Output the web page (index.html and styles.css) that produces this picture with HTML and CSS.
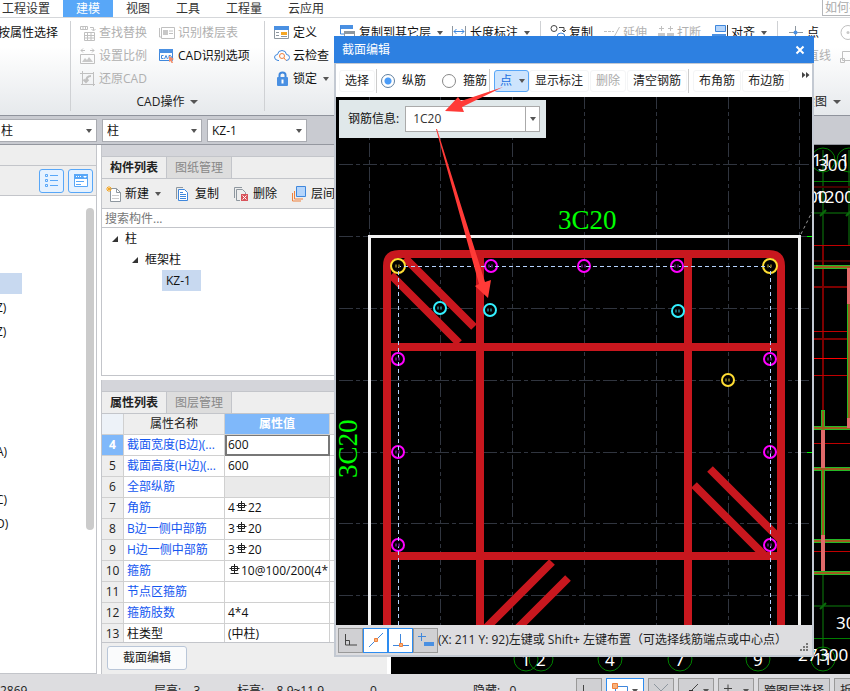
FILE: index.html
```
<!DOCTYPE html>
<html lang="zh-CN">

<head>
    <meta charset="UTF-8">
    <meta name="viewport" content="width=device-width, initial-scale=1.0">
    <title>截面编辑</title>
    <link rel="stylesheet" href="styles.css">
</head>

<body>
    <div class="app">
        <!-- 菜单栏 -->
        <nav class="menubar">
            <a href="#">工程设置</a>
            <a href="#" class="active">建模</a>
            <a href="#">视图</a>
            <a href="#">工具</a>
            <a href="#">工程量</a>
            <a href="#">云应用</a>
            <input class="help-search" type="text" aria-label="搜索帮助" placeholder="如何在">
        </nav>

        <!-- 功能区 -->
        <div class="ribbon">
            <div class="group group-select">
                <button class="tool">按属性选择</button>
            </div>
            <div class="group group-cad">
                <button class="tool" disabled>
                    <svg class="icon" viewBox="0 0 16 16"><path d="M.5 1.500h7v3h-7zM3 1v3M5.500 1v3M10 2.500h3.500v3M11.500 4l2 2 2-2M4.500 7.500h10v8h-10zM4 10.500h11M4 13h11M7.500 7v8M11 7v8" /></svg>
                    查找替换
                </button>
                <button class="tool" disabled>
                    <svg class="icon" viewBox="0 0 16 16"><path d="M.5 3v9H3M2.500 2.500h13v11h-13zM10 6h4M10 8.500h4" /><path class="solid" d="M4 5h5v5H4z" /></svg>
                    识别楼层表
                </button>
                <button class="tool" disabled>
                    <svg class="icon" viewBox="0 0 16 16"><path d="M1 2.500h4M3 .5l-2 2 2 2M10 2.500h4M12 .5l2 2-2 2M.5 6.500h14v9H.5z" /><path class="solid" d="M2 14l3-4 2 2 2-3 4 5z" /></svg>
                    设置比例
                </button>
                <button class="tool">
                    <svg class="icon" viewBox="0 0 16 16"><path class="blue" d="M.5 1.500h13v11H.5z" /><path class="blue-fill" d="M0 1h14v4H0z" /><path class="blue" d="M4.500 7.500h-2v3h2M5.500 11L7 7.500 8.500 11M10 7.500v3h1.500l1-1.500-1-1.500z" /><path class="salmon" d="M10 8l5 3-2 1 1 3h-1.500l-1-2-1.500 1z" /></svg>
                    CAD识别选项
                </button>
                <button class="tool" disabled>
                    <svg class="icon" viewBox="0 0 16 16"><path d="M2.500 0v14M0 2.500h14M13.500 1v14M1 13.500h14" /><path d="M11 5Q6 5 6 11M3.500 8.500L6 11l2.500-2.500" stroke-width="2" /></svg>
                    还原CAD
                </button>
                <button class="caption">CAD操作<i class="caret"></i></button>
            </div>
            <div class="group group-common">
                <button class="tool">
                    <svg class="icon" viewBox="0 0 16 16"><path class="grey" d="M.5 1.500h14v12H.5zM2 7.500h3M2 10.500h3M7 11.500h6" /><path class="blue-fill" d="M0 1h15v4H0z" /><path class="orange-fill" d="M7 7h6v3H7z" /></svg>
                    定义
                </button>
                <button class="tool">
                    <svg class="icon" viewBox="0 0 16 16"><path class="blue-fill" d="M0 0h13v4H0z" /><path class="blue" d="M.5 1v8H4" /><path class="grey" d="M4.500 6.500h10v8h-10z" /><path class="grey-fill" d="M4 6h11v3H4z" /></svg>
                    复制到其它层<i class="caret"></i>
                </button>
                <button class="tool">
                    <svg class="icon" viewBox="0 0 16 16"><path class="grey" d="M1.500 1v14M14.500 1v14" /><path class="blue" d="M3 6.500h10M5.500 4L3 6.500 5.500 9M10.500 4L13 6.500 10.500 9" /></svg>
                    长度标注<i class="caret"></i>
                </button>
                <button class="tool">
                    <svg class="icon" viewBox="0 0 16 16"><path class="blue" d="M5 12.500H4Q.5 12 .5 9 1 6.500 3.500 6.500 4 2.500 8 2.500t4.500 4q3 0 3 3t-3.500 3" /><circle class="orange" cx="8" cy="8" r="2.500" /><path class="orange" d="M10 10l2 2.500" /></svg>
                    云检查
                </button>
                <button class="tool lock">
                    <svg class="icon" viewBox="0 0 16 16"><path class="blue" d="M5.500 7V4q0-2.500 3-2.500t3 2.500v3" stroke-width="2" /><rect class="blue-fill" x="3" y="6" width="11" height="9" rx="1" /><path d="M8.500 8.500v4" stroke="#fff" stroke-width="2" /></svg>
                    锁定<i class="caret"></i>
                </button>
            </div>
            <div class="group group-edit">
                <button class="tool">
                    <svg class="icon" viewBox="0 0 16 16"><circle class="dark" cx="4" cy="3.500" r="3" /><path class="dark" d="M9 2.500h5v4M12 5l2 2 2-2" /><circle class="blue" cx="11" cy="12" r="4" /></svg>
                    复制
                </button>
                <button class="tool" disabled>
                    <svg class="icon" viewBox="0 0 16 16"><path d="M0 6.500h3M4 6.500h3M8 6.500h2M15.500 2L10 12" /></svg>
                    延伸
                </button>
                <button class="tool" disabled>
                    <svg class="icon" viewBox="0 0 16 16"><path d="M1 3.500h5M3.500 1v5M10 3.500h5M12.500 1v5" /><path class="solid" d="M0 8h7v6H0zM9 8h7v6H9z" /></svg>
                    打断
                </button>
                <button class="tool">
                    <svg class="icon" viewBox="0 0 16 16"><path class="blue pale" d="M3.500.5h10v6h-10z" /><path class="blue-fill" d="M0 9h14v6H0z" /><path class="dark" d="M15.500 0v16" /></svg>
                    对齐<i class="caret"></i>
                </button>
            </div>
            <div class="group group-draw">
                <button class="tool">
                    <svg class="icon" viewBox="0 0 16 16"><path class="grey" d="M1 7.500h14M7.500 1v14" /><circle class="blue-fill" cx="7.500" cy="7.500" r="2" /></svg>
                    点
                </button>
                <button class="tool" aria-label="圆" disabled>
                    <svg class="icon" viewBox="0 0 16 16"><circle cx="8" cy="7.500" r="7" /><circle class="solid" cx="8" cy="7.500" r="1.500" /></svg>
                </button>
                <button class="tool" disabled>
                    <svg class="icon" viewBox="0 0 16 16"><path d="M2 13L13 2" /></svg>
                    直线
                </button>
                <button class="tool" aria-label="矩形" disabled>
                    <svg class="icon" viewBox="0 0 16 16"><path d="M2.500 3.500h13v9h-13zM.5 10.500h4v4h-4z" /></svg>
                </button>
                <button class="caption">绘图<i class="caret"></i></button>
            </div>
        </div>

        <!-- 构件选择 -->
        <div class="selectors">
            <label class="select-wrap"><select aria-label="构件分类"><option>柱</option></select></label>
            <label class="select-wrap"><select aria-label="构件类型"><option>柱</option></select></label>
            <label class="select-wrap"><select aria-label="构件名称"><option>KZ-1</option></select></label>
        </div>

        <div class="workspace">
            <!-- 导航树 -->
            <aside class="nav-panel">
                <div class="nav-title"></div>
                <div class="nav-tools">
                    <button class="view-btn" aria-label="列表">
                        <svg class="icon" viewBox="0 0 16 16"><path class="sky" d="M1.500 1.500h2v2h-2zM1.500 6.500h2v2h-2zM1.500 11.500h2v2h-2zM6 2.500h8M6 7.500h8M6 12.500h8" /></svg>
                    </button>
                    <button class="view-btn" aria-label="详情">
                        <svg class="icon" viewBox="0 0 16 16"><path class="sky white" d="M1.500 1.500h13v12h-13z" /><path fill="#58a7f8" d="M1 1h14v5H1z" /><path class="sky" d="M3 8.500h8M3 11.500h5" /><path d="M3 3.500h1M5 3.500h1M7 3.500h1" stroke="#fff" /><path d="M10 3h4l-2 2z" fill="#fff" /></svg>
                    </button>
                </div>
                <div class="nav-list">
                    <ul>
                        <li class="selected"></li>
                        <li>Z)</li>
                        <li>Z)</li>
                        <li></li>
                        <li></li>
                        <li></li>
                        <li></li>
                        <li>A)</li>
                        <li></li>
                        <li>C)</li>
                        <li>D)</li>
                    </ul>
                    <div class="scroll-thumb"></div>
                </div>
            </aside>

            <div class="dock">
                <section class="panel panel-components">
                    <div class="grip-bar"></div>
                    <div class="tabs">
                        <button class="tab active">构件列表</button>
                        <button class="tab">图纸管理</button>
                    </div>
                    <div class="panel-tools">
                        <button class="tool">
                            <svg class="icon" viewBox="0 0 16 16"><path class="grey white" d="M4.500 2.500h6l4 4v9h-10z" /><path class="grey" d="M10.500 2.500v4h4" /><path d="M6 9.500h7M6 12.500h7" stroke="#ccc" /><path d="M3 0v6M0 3h6M1 1l4 4M5 1L1 5" stroke="#f5a623" /></svg>
                            新建<i class="caret"></i>
                        </button>
                        <button class="tool">
                            <svg class="icon" viewBox="0 0 16 16"><path class="grey" d="M.5 13V1.500H7" /><path class="blue white" d="M2.500 3.500h6l3 3v8h-9z" /><path class="blue" d="M4 6.500h3M4 8.500h6M4 10.500h6M4 12.500h6" /></svg>
                            复制
                        </button>
                        <button class="tool">
                            <svg class="icon" viewBox="0 0 16 16"><path class="grey" d="M.5 12V1.500H8M6 14.500H2.500v-11h6l3 3V8" /><path fill="#d9535b" d="M7 8h7v7H7z" /><path d="M8.500 9.500l4 4M12.500 9.500l-4 4" stroke="#fff" /></svg>
                            删除
                        </button>
                        <button class="tool">
                            <svg class="icon" viewBox="0 0 16 16"><path class="orange" d="M.5 7v8H9M2.500 5v8H11" /><path class="blue pale" d="M4.500.5h9v10h-9z" /></svg>
                            层间复制
                        </button>
                    </div>
                    <input class="search" type="text" aria-label="搜索构件" placeholder="搜索构件...">
                    <ul class="tree">
                        <li><span><i class="expand"></i>柱</span>
                            <ul>
                                <li><span><i class="expand"></i>框架柱</span>
                                    <ul class="leaves">
                                        <li><span class="selected">KZ-1</span></li>
                                    </ul>
                                </li>
                            </ul>
                        </li>
                    </ul>
                </section>

                <section class="panel panel-props">
                    <div class="grip-bar"></div>
                    <div class="tabs">
                        <button class="tab active">属性列表</button>
                        <button class="tab">图层管理</button>
                    </div>
                    <div class="props-scroll">
                        <table class="props">
                            <thead>
                                <tr><th class="no"></th><th class="name">属性名称</th><th class="value">属性值</th><th></th></tr>
                            </thead>
                            <tbody>
                                <tr class="current"><td>4</td><td>截面宽度(B边)(...</td><td>600</td><td></td></tr>
                                <tr><td>5</td><td>截面高度(H边)(...</td><td>600</td><td></td></tr>
                                <tr><td>6</td><td>全部纵筋</td><td class="disabled"></td><td></td></tr>
                                <tr><td>7</td><td>角筋</td><td class="rebar">4<svg class="grade" viewBox="0 0 11 12"><use href="#grade" /></svg>22</td><td></td></tr>
                                <tr><td>8</td><td>B边一侧中部筋</td><td class="rebar">3<svg class="grade" viewBox="0 0 11 12"><use href="#grade" /></svg>20</td><td></td></tr>
                                <tr><td>9</td><td>H边一侧中部筋</td><td class="rebar">3<svg class="grade" viewBox="0 0 11 12"><use href="#grade" /></svg>20</td><td></td></tr>
                                <tr><td>10</td><td>箍筋</td><td class="rebar"><svg class="grade" viewBox="0 0 11 12"><use href="#grade" /></svg>10@100/200(4*</td><td></td></tr>
                                <tr><td>11</td><td>节点区箍筋</td><td></td><td></td></tr>
                                <tr><td>12</td><td>箍筋肢数</td><td>4*4</td><td></td></tr>
                                <tr class="plain"><td>13</td><td>柱类型</td><td>(中柱)</td><td></td></tr>
                            </tbody>
                        </table>
                    </div>
                    <div class="panel-foot">
                        <button class="edit-btn">截面编辑</button>
                    </div>
                </section>
            </div>

            <!-- 主绘图区 -->
            <svg class="plan" viewBox="391 145 459 529" preserveAspectRatio="xMaxYMin slice">
                <defs>
                    <!-- 三级钢符号 -->
                    <g id="grade" fill="none" stroke="#222">
                        <path d="M2.500 2.500h6v4h-6zM5.500 0v9.500M1.500 9.500h8M.5 4.500h10" />
                    </g>
                </defs>
                <g fill="none">
                    <path stroke="#064006" stroke-width="2" d="M823 150v95M849 150v95M814 213h36M823 575v85M814 606h36" />
                    <path stroke="#007d00" d="M814 181.500h36M814 638.500h36" />
                    <path stroke="#0a6b0a" stroke-width="2" d="M820 216l6-6M846 216l6-6M820 609l6-6" />
                    <path stroke="#450000" stroke-width="2" d="M814 187h36M814 261h36" />
                    <path stroke="#7d0000" stroke-width="2" d="M823 245v165M814 287h36M814 339h36" />
                    <path stroke="#c00000" d="M814 245.500h36M814 331.500h36M814 375.500h36M814 443.500h36M814 551.500h36" />
                    <path stroke="#ff0000" d="M814 358.500h36" />
                    <path stroke="#25b925" stroke-width="4" d="M814 267h36M814 428h36M814 469h36M814 541h36M814 573h36M849 304v114M823 410v19M823 470v65" />
                    <path stroke="#a05a1e" stroke-width="2" d="M814 267h36M814 428h36M814 469h36M814 541h36M814 573h36M849 304v114M823 411v124" />
                    <path stroke="#e06a6a" stroke-width="4" d="M849 268v36M849 418v10M823 430v38M823 535v36" />
                    <g stroke="#008000">
                        <circle cx="823" cy="160" r="12" />
                        <circle cx="849" cy="160" r="12" />
                        <circle cx="526" cy="659" r="12" />
                        <circle cx="541" cy="659" r="12" />
                        <circle cx="610" cy="659" r="12" />
                        <circle cx="680" cy="659" r="12" />
                        <circle cx="758" cy="659" r="12" />
                        <circle cx="823" cy="659" r="12" />
                    </g>
                </g>
                <g class="plan-text">
                    <text x="812" y="166">11</text>
                    <text x="818" y="171">300</text>
                    <text x="840" y="166">11</text>
                    <text x="808" y="203">00</text>
                    <text x="815" y="203">1200</text>
                    <text x="521" y="666">1</text>
                    <text x="536" y="666">2</text>
                    <text x="605" y="666">4</text>
                    <text x="675" y="666">7</text>
                    <text x="753" y="666">9</text>
                    <text x="798" y="661">27</text>
                    <text x="813" y="665">11</text>
                    <text x="819" y="661">300</text>
                    <text x="836" y="629">300</text>
                </g>
            </svg>
        </div>

        <!-- 状态栏 -->
        <footer class="statusbar">
            <span class="coord">2869</span>
            <span class="floor">层高:&nbsp;&nbsp;&nbsp;&nbsp;3</span>
            <span class="level">标高:&nbsp;&nbsp;&nbsp;&nbsp;8.9~11.9</span>
            <span class="count">0</span>
            <span class="hidden-count">隐藏:&nbsp;&nbsp;&nbsp;0</span>
            <div class="status-buttons">
                <button aria-label="正交"><svg class="icon" viewBox="0 0 16 16"><path class="dark" d="M2.500 2v11H14M2.500 9.500h4V13" /></svg></button>
                <button class="on" aria-label="捕捉"><svg class="icon" viewBox="0 0 16 16"><path class="blue" d="M3.500 3.500h12v12h-12z" /><path d="M.5.500h5v5h-5z" fill="#f9b27a" stroke="#f0813c" /></svg><i class="caret"></i></button>
                <button aria-label="交点"><svg class="icon" viewBox="0 0 16 16"><path class="grey" d="M1 1l14 14M15 1L1 15" /></svg></button>
                <button aria-label="中点"><svg class="icon" viewBox="0 0 16 16"><path class="dark" d="M15 1L2 14" /><path fill="#333" d="M6 7h4v4H6z" /></svg><i class="caret"></i></button>
                <button aria-label="坐标"><svg class="icon" viewBox="0 0 16 16"><path class="dark" d="M1 5.500h8M5 1.500v8" /></svg><i class="caret"></i></button>
                <button class="text">跨图层选择</button>
                <button class="text">折线选择</button>
            </div>
        </footer>
    </div>

    <!-- 截面编辑窗口 -->
    <div class="dialog" role="dialog" aria-labelledby="dialogTitle">
        <header class="dialog-title">
            <span id="dialogTitle">截面编辑</span>
            <button class="close" aria-label="关闭"><svg viewBox="0 0 10 10"><path d="M1.500 1.500l7 7M8.500 1.500l-7 7" stroke="#fff" stroke-width="2" /></svg></button>
        </header>

        <div class="dialog-body">
            <div class="dialog-tools">
                <button>选择</button>
                <i class="sep"></i>
                <label class="radio"><input type="radio" name="bar" checked>纵筋</label>
                <label class="radio second"><input type="radio" name="bar">箍筋</label>
                <i class="sep"></i>
                <button class="on">点<i class="caret"></i></button>
                <button>显示标注</button>
                <button disabled>删除</button>
                <button>清空钢筋</button>
                <i class="sep"></i>
                <button>布角筋</button>
                <button>布边筋</button>
                <button class="more" aria-label="更多"><svg viewBox="0 0 8 6"><path d="M0 0l3.500 3L0 6zM4 0l3.500 3L4 6z" fill="#444" /></svg></button>
            </div>

            <div class="canvas">
                <svg class="section" viewBox="337 97 475 528">
                    <!-- 网格 -->
                    <path class="grid" d="M369.500 95v530M440.500 95v530M512.500 95v530M584.500 95v530M656.500 95v530M728.500 95v530M799.500 95v530" />
                    <path class="grid" d="M339 164.500h473M339 236.500h473M339 308.500h473M339 380.500h473M339 452.500h473M339 523.500h473M339 595.500h473" />
                    <path d="M801 234l11-22" stroke="#999" stroke-dasharray="3 3" />
                    <path d="M807 236.500h5M807 452.500h5" stroke="#00ff00" />
                    <!-- 柱边线 -->
                    <path d="M369.500 625V236.500h430V625" fill="none" stroke="#f2f2f2" stroke-width="3" />
                    <!-- 箍筋 -->
                    <g fill="none" stroke="#c8171e" stroke-width="8">
                        <path d="M387 625V266q0-12 12-12h370q12 0 12 12v359" />
                        <path d="M480 625V254M688 625V254M387 347h394M387 556h394" />
                        <path d="M405 258l69 69M391 275l68 68M552 562l-66 66M568 578l-50 50M694 485l71 71M710 469l70 70" />
                    </g>
                    <!-- 钢筋 -->
                    <g fill="#000" stroke-width="2">
                        <g stroke="#ffdd33">
                            <circle cx="398" cy="266" r="7" />
                            <circle cx="770" cy="266" r="7" />
                            <circle cx="728" cy="380" r="6" />
                        </g>
                        <g stroke="#ff00ff">
                            <circle cx="491" cy="266" r="6" />
                            <circle cx="584" cy="266" r="6" />
                            <circle cx="677" cy="266" r="6" />
                            <circle cx="398" cy="359" r="6" />
                            <circle cx="398" cy="452" r="6" />
                            <circle cx="398" cy="545" r="6" />
                            <circle cx="770" cy="359" r="6" />
                            <circle cx="770" cy="452" r="6" />
                            <circle cx="770" cy="545" r="6" />
                        </g>
                        <g stroke="#33f0ff">
                            <circle cx="440" cy="308" r="6" />
                            <circle cx="490" cy="310" r="6" />
                            <circle cx="678" cy="311" r="6" />
                        </g>
                    </g>
                    <path d="M398.500 625V266.500h372V625" fill="none" stroke="#b5d3ff" stroke-dasharray="4 3" />
                    <g fill="none" stroke-dasharray="2 1" stroke-width="3">
                        <path d="M395 266h6M767 266h6M725 380h6" stroke="#6b6018" />
                        <path d="M488 266h6M581 266h6M674 266h6M395 359h6M395 452h6M395 545h6M767 359h6M767 452h6M767 545h6" stroke="#5a1070" />
                        <path d="M437 308h6M487 310h6M675 311h6" stroke="#1a6470" />
                    </g>
                    <text class="mark" x="558" y="229">3C20</text>
                    <text class="mark" transform="translate(357 478) rotate(-90)">3C20</text>
                </svg>

                <div class="rebar-info">
                    <label for="rebarInput">钢筋信息:</label>
                    <div class="combo">
                        <input id="rebarInput" type="text" value="1C20">
                        <button aria-label="展开"><i class="caret"></i></button>
                    </div>
                </div>
            </div>

            <div class="dialog-status">
                <div class="snap-buttons">
                    <button aria-label="正交"><svg class="icon" viewBox="0 0 16 16"><path class="dark" d="M2.500 2v11H14M2.500 8.500h4V13" /></svg></button>
                    <button class="on" aria-label="最近点"><svg class="icon" viewBox="0 0 16 16"><path class="blue" d="M1 15L15 1" /><path class="snap-dot" d="M6.500 6.500h3v3h-3z" /></svg></button>
                    <button class="on" aria-label="垂点"><svg class="icon" viewBox="0 0 16 16"><path class="blue" d="M0 13.500h16M7.500 2v11" /><path class="snap-dot" d="M6.500 11.500h3v3h-3z" /></svg></button>
                    <button aria-label="动态输入"><svg class="icon" viewBox="0 0 16 16"><path class="blue" d="M0 4.500h8M3.500 1v8" /><path class="blue-fill" d="M6 10h10v4H6z" /></svg></button>
                </div>
                <span>(X: 211 Y: 92)左键或 Shift+ 左键布置（可选择线筋端点或中心点）</span>
                <svg class="resize" viewBox="0 0 8 8"><path d="M6 0h2v2H6zM3 3h2v2H3zM6 3h2v2H6zM0 6h2v2H0zM3 6h2v2H3zM6 6h2v2H6z" fill="#777" /></svg>
            </div>
        </div>

        <!-- 操作提示箭头 -->
        <svg class="arrows" viewBox="334 36 480 621">
            <path d="M503 87L461 101l-3-4L445 111l19 1-2-5z" fill="#ff3a37" />
            <path d="M436 129L479 284l-4 2 13 12 3-18-6 2L437 129z" fill="#ff3a37" />
        </svg>
    </div>
</body>

</html>
```
FILE: styles.css
```
* {
    box-sizing: border-box;
}

body {
    margin: 0;
    height: 100vh;
    overflow: hidden;
    position: relative;
    font-family: "Open Sans", "Noto Sans CJK SC", sans-serif;
    font-size: 12px;
    line-height: 18px;
    color: #222;
    background: white;
}

button,
input,
select {
    font: inherit;
    color: inherit;
    margin: 0;
    padding: 0;
    border: none;
    background: none;
    outline: none;
}

button {
    display: flex;
    align-items: center;
    white-space: nowrap;
}

ul {
    list-style: none;
    margin: 0;
    padding: 0;
}

/* 状态栏有一半在窗口下方 */
.app {
    display: flex;
    flex-direction: column;
    height: calc(100vh + 16px);
}

.caret {
    flex: none;
    width: 0;
    height: 0;
    border: 3px solid transparent;
    border-top: 4px solid #555;
    border-bottom: none;
}

/* 图标 */
.icon {
    flex: none;
    width: 16px;
    height: 16px;
    fill: none;
}

.icon .blue {
    stroke: #3f87dc;
}

.icon .sky {
    stroke: #58a7f8;
}

.icon .grey {
    stroke: #8e979f;
}

.icon .dark {
    stroke: #444;
}

.icon .orange {
    stroke: #f0813c;
}

.icon .white {
    fill: white;
}

.icon .pale {
    fill: #b5d5fb;
}

.icon .blue-fill {
    fill: #4a90e2;
}

.icon .grey-fill {
    fill: #8e979f;
}

.icon .orange-fill {
    fill: #f5a623;
}

.icon .salmon {
    fill: #f28c6a;
}

.icon .snap-dot {
    fill: #f9b27a;
    stroke: #f0813c;
}

/* 菜单栏 */
.menubar {
    flex: none;
    display: flex;
    height: 18px;
    border-bottom: 1px solid #d5d7da;
}

.menubar a {
    padding: 0 13px;
    color: #333;
    text-decoration: none;
    line-height: 17px;
}

.menubar a:first-child {
    padding-left: 2px;
}

.menubar .active {
    color: white;
    background: #58a7f8;
}

.help-search {
    width: 28px;
    height: 16px;
    margin-left: auto;
    padding-left: 2px;
    border: 1px solid #b5b7ba;
    border-top: none;
    border-right: none;
}

.help-search::placeholder {
    color: #aaa;
    opacity: 1;
}

/* 功能区 */
.ribbon {
    flex: none;
    display: flex;
    height: 98px;
    padding: 3px 0 4px;
    overflow: hidden;
    background: linear-gradient(white 30%, #e6e9ec);
    border-bottom: 1px solid #8f939c;
}

.group {
    flex: none;
    display: grid;
    grid-template-rows: repeat(3, 23px) 24px;
    align-content: start;
    border-right: 1px solid #cfd1d4;
}

.tool {
    gap: 3px;
    color: #111;
}

.tool .caret {
    margin-left: 3px;
}

.tool:disabled {
    color: #b0b0b0;
}

.tool:disabled .icon {
    stroke: #c0c0c0;
}

.tool:disabled .solid {
    fill: #c8c8c8;
    stroke: none;
}

.caption {
    grid-row: 4;
    grid-column: 1 / -1;
    justify-self: center;
    gap: 6px;
}

.caption .caret {
    border-width: 4px 4px 0;
}

.group-select {
    width: 71px;
}

.group-select .tool {
    margin-left: -2px;
}

.group-cad {
    grid-template-columns: 79px 96px;
    width: 194px;
    padding: 0 9px;
}

.group-common {
    grid-template-columns: 66px 111px 88px;
    width: 276px;
    padding-left: 9px;
}

.group-common .lock {
    grid-row: 3;
    grid-column: 1;
}

.group-edit {
    grid-template-columns: repeat(4, 54px);
    width: 237px;
    padding-left: 9px;
}

.group-draw {
    grid-template-columns: 52px 16px;
    padding: 0 10px;
}

/* 构件选择 */
.selectors {
    flex: none;
    display: flex;
    gap: 5px;
    height: 29px;
    padding-top: 3px;
    background: #c9cbd1;
    border-bottom: 1px solid #94979f;
}

.select-wrap {
    position: relative;
    width: 100px;
    height: 23px;
    background: white;
    border: 1px solid #a9abb1;
}

.select-wrap:first-child {
    width: 97px;
    border-left: none;
}

.select-wrap select {
    appearance: none;
    width: 100%;
    height: 21px;
    padding-left: 4px;
    color: #111;
}

.select-wrap:first-child select {
    padding-left: 1px;
}

.select-wrap::after {
    content: "";
    position: absolute;
    top: 9px;
    right: 4px;
    border: 3px solid transparent;
    border-top: 4px solid #555;
    border-bottom: none;
}

.workspace {
    flex: 1;
    min-height: 0;
    display: flex;
}

/* 导航树 */
.nav-panel {
    flex: none;
    display: flex;
    flex-direction: column;
    width: 97px;
    border-right: 1px solid #c3c5ca;
    border-bottom: 1px solid #c3c5ca;
}

.nav-title {
    height: 21px;
    background: #eee;
    border-bottom: 1px solid #c3c5ca;
}

.nav-tools {
    display: flex;
    justify-content: flex-end;
    gap: 4px;
    height: 30px;
    padding: 3px 3px 0 0;
    background: #eee;
    border-bottom: 1px solid #c3c5ca;
}

.view-btn {
    justify-content: center;
    width: 25px;
    height: 24px;
    background: #e6f2ff;
    border: 1px solid #58a7f8;
    border-radius: 3px;
}

.nav-list {
    flex: 1;
    display: flex;
    justify-content: space-between;
    padding-right: 2px;
}

.nav-list ul {
    width: 22px;
    padding-top: 77px;
}

.nav-list li {
    height: 24px;
    margin-left: -4px;
    line-height: 24px;
    color: #111;
}

.nav-list .selected {
    height: 21px;
    margin: 0 0 2px;
    background: #c8d9f0;
}

.scroll-thumb {
    width: 8px;
    height: 67.5%;
    margin-top: 12px;
    border-radius: 4px;
    background: #cbcbcb;
}

/* 停靠面板 */
.dock {
    flex: none;
    display: flex;
    flex-direction: column;
    gap: 4px;
    width: 294px;
    padding: 0 4px;
}

.panel {
    display: flex;
    flex-direction: column;
    border: 1px solid #c3c5ca;
    border-right: none;
}

.panel-components {
    flex: none;
    height: 231px;
    border-top: none;
}

.panel-props {
    flex: 1;
    min-height: 0;
    border-top: none;
    border-bottom: none;
}

.grip-bar {
    flex: none;
    height: 12px;
    background: #d4d5da;
    border-bottom: 1px solid #c3c5ca;
}

.tabs {
    flex: none;
    display: flex;
    height: 22px;
    background: #eee;
    border-bottom: 1px solid #c3c5ca;
}

.tab {
    justify-content: center;
    width: 65px;
    color: #888;
    background: #ddd;
    border-right: 1px solid #c3c5ca;
}

.tab.active {
    color: #222;
    font-weight: bold;
    background: #eee;
}

.panel-tools {
    flex: none;
    display: flex;
    gap: 15px;
    height: 30px;
    padding-left: 4px;
    overflow: hidden;
    background: #eee;
    border-bottom: 1px solid #c3c5ca;
}

.search {
    flex: none;
    height: 19px;
    padding-left: 3px;
    border-bottom: 1px solid #c3c5ca;
}

.search::placeholder {
    color: #777;
    opacity: 1;
}

.tree {
    padding-left: 10px;
    line-height: 21px;
    color: #111;
}

.tree ul {
    padding-left: 20px;
}

.tree .leaves {
    padding-left: 30px;
}

.tree span {
    display: inline-flex;
    align-items: center;
    gap: 7px;
    height: 21px;
    vertical-align: top;
}

.tree .selected {
    padding: 0 10px 0 4px;
    background: #c8d9f0;
}

.expand {
    border: 3px solid #333;
    border-top-color: transparent;
    border-left-color: transparent;
}

/* 属性表 */
.props-scroll {
    flex: 1;
    min-height: 0;
    overflow: hidden;
    border-bottom: 1px solid #c3c5ca;
}

.props {
    table-layout: fixed;
    width: 100%;
    border-collapse: separate;
    border-spacing: 0;
}

.props th,
.props td {
    height: 21px;
    padding: 0 0 0 3px;
    overflow: hidden;
    white-space: nowrap;
    border-right: 1px solid #d0d0d0;
    border-bottom: 1px solid #d0d0d0;
}

.props th {
    padding: 0;
    font-weight: normal;
    background: #eee;
}

.props .no {
    width: 22px;
    background: #edf2f8;
}

.props .name {
    width: 101px;
}

.props .value {
    width: 105px;
    color: white;
    font-weight: bold;
    background: #7fb8fa;
}

.props td:first-child {
    padding: 0;
    text-align: center;
    background: #eee;
}

.props td:nth-child(2) {
    color: #1457f0;
}

.props td:nth-child(3) {
    color: #111;
}

.props .plain td:nth-child(2) {
    color: #111;
}

.props .current td:first-child {
    color: white;
    font-weight: bold;
    background: #7fb8fa;
}

.props .current td:nth-child(3) {
    padding-left: 1px;
    border: 2px solid #777;
    border-top-width: 1px;
}

.props td.disabled {
    background: #eaeaea;
}

.grade {
    width: 11px;
    height: 12px;
    margin: 0 1px;
    vertical-align: -1px;
}

.panel-foot {
    flex: none;
    height: 31px;
    padding: 3px 5px;
    background: #eee;
}

.edit-btn {
    justify-content: center;
    width: 80px;
    height: 24px;
    background: #fafbfc;
    border: 1px solid #b9c6d8;
    border-radius: 3px;
}

/* 主绘图区 */
.plan {
    flex: 1;
    min-width: 0;
    height: 100%;
    background: black;
}

.plan-text {
    fill: white;
    font-family: "Noto Sans", sans-serif;
    font-size: 17px;
}

/* 状态栏 */
.statusbar {
    flex: none;
    display: flex;
    align-items: center;
    height: 33px;
    background: #dddde0;
    white-space: nowrap;
}

.statusbar span {
    flex: none;
}

.coord {
    width: 154px;
}

.floor {
    width: 83px;
}

.level {
    width: 133px;
}

.count,
.hidden-count {
    width: 103px;
}

.status-buttons {
    flex: none;
    display: flex;
    gap: 4px;
}

.status-buttons button {
    flex: none;
    justify-content: center;
    gap: 4px;
    height: 26px;
    padding: 0 4px;
    background: #d0d0d3;
    border: 1px solid #999;
}

.status-buttons .on {
    padding: 0 5px;
    background: white;
    border-color: #2d8cf0;
}

.status-buttons .text {
    padding: 0 5px;
}

/* 截面编辑窗口 */
.dialog {
    position: absolute;
    left: 334px;
    top: 36px;
    width: 480px;
    background: white;
}

.dialog-title {
    display: flex;
    align-items: center;
    justify-content: space-between;
    height: 27px;
    padding: 0 9px 0 8px;
    color: white;
    background: #2d80e1;
}

.close svg {
    width: 10px;
    height: 10px;
}

.dialog-body {
    border: 2px solid #c3c9d2;
    border-top-width: 1px;
}

.dialog-tools {
    display: flex;
    align-items: center;
    height: 33px;
    padding-left: 3px;
    color: #222;
}

.dialog-tools button {
    justify-content: center;
    height: 22px;
    margin-right: 1px;
    padding: 0 5px;
    border: 1px solid #f4f5f6;
    border-radius: 3px;
}

.dialog-tools button:disabled {
    color: #aaa;
}

.dialog-tools .on {
    gap: 7px;
    padding: 0 3px 0 5px;
    margin-right: 0;
    color: #1a6fe0;
    background: #cde4fd;
    border-color: #58a7f8;
}

.sep {
    flex: none;
    width: 1px;
    height: 24px;
    margin-right: 4px;
    background: #ccc;
}

.radio {
    display: flex;
    align-items: center;
    gap: 7px;
    white-space: nowrap;
    color: #111;
}

.radio.second {
    margin: 0 2px 0 16px;
}

.radio input {
    appearance: none;
    width: 14px;
    height: 14px;
    border: 1px solid #888;
    border-radius: 50%;
}

.radio input:checked {
    border-color: #5f7f9f;
    background: radial-gradient(#4a9cf8 3px, white 4px);
}

.dialog-tools .more {
    align-items: flex-start;
    margin: 0 2px 0 auto;
    padding: 2px 0 0;
    border: none;
}

.more svg {
    width: 8px;
    height: 6px;
}

.canvas {
    position: relative;
    padding-left: 1px;
    background: black;
}

.section {
    display: block;
    width: 100%;
}

.grid {
    stroke: #30353f;
    stroke-dasharray: 14 3 4 3;
}

.mark {
    fill: #00ff00;
    font-family: "Liberation Serif", serif;
    font-size: 27px;
}

.rebar-info {
    position: absolute;
    left: 3px;
    top: 3px;
    display: flex;
    align-items: center;
    gap: 6px;
    height: 38px;
    padding: 0 6px 0 9px;
    color: #111;
    background: #e0e8ea;
}

.combo {
    display: flex;
    width: 135px;
    height: 26px;
    background: white;
    border: 1px solid #aaa;
}

.combo input {
    flex: 1;
    min-width: 0;
    padding-left: 7px;
    color: #333;
}

.combo button {
    justify-content: center;
    width: 14px;
    border-left: 1px solid #aaa;
}

.dialog-status {
    display: flex;
    align-items: center;
    height: 30px;
    padding-left: 2px;
    background: #dddde0;
    white-space: nowrap;
}

.snap-buttons {
    display: flex;
}

.snap-buttons button {
    justify-content: center;
    width: 25px;
    height: 25px;
    background: #d0d0d3;
    border: 1px solid #999;
}

.snap-buttons .on {
    background: white;
    border-color: #2d8cf0;
}

.resize {
    align-self: flex-end;
    width: 8px;
    height: 8px;
    margin: 0 4px 4px auto;
}

.arrows {
    position: absolute;
    left: 0;
    top: 0;
    width: 100%;
    height: 100%;
    pointer-events: none;
}
```
